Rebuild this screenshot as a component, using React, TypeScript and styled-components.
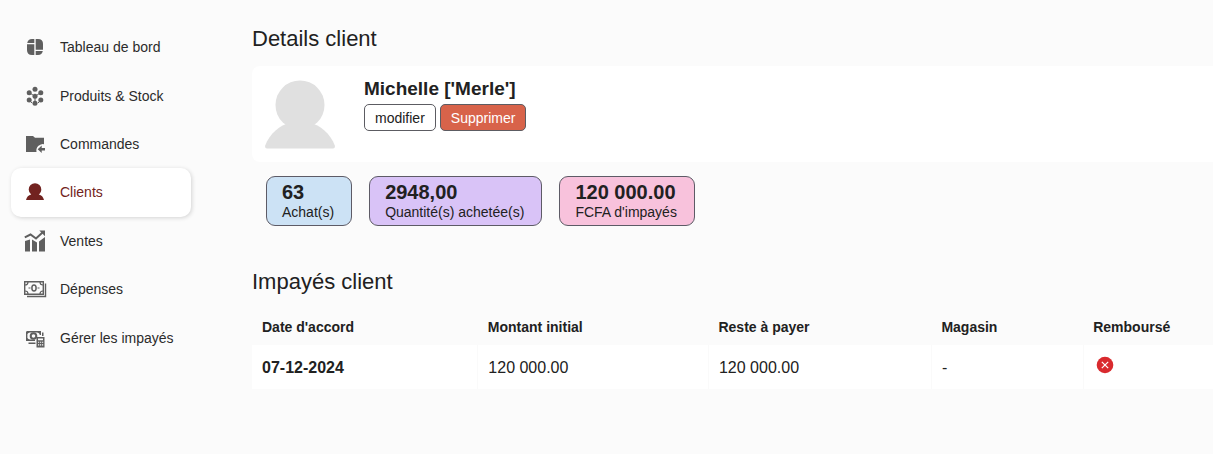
import React from "react";
import styled, { createGlobalStyle } from "styled-components";

const GlobalStyle = createGlobalStyle`
  * { box-sizing: border-box; }
  body {
    margin: 0;
    background: #fbfbfb;
    color: #212121;
    font-family: "Liberation Sans", Arial, sans-serif;
    font-size: 14px;
    overflow-x: hidden;
  }
`;

const Page = styled.div`
  display: flex;
  align-items: flex-start;
  min-height: 100vh;
`;

const Nav = styled.nav`
  flex: 0 0 180px;
  height: 339px;
  margin: 23px 61px 0 11px;
  display: grid;
  grid-auto-rows: 1fr;
`;

const NavLink = styled.a<{ $active?: boolean }>`
  display: flex;
  align-items: center;
  gap: 13px;
  padding-left: 12px;
  border-radius: 10px;
  text-decoration: none;
  white-space: nowrap;
  color: ${(p) => (p.$active ? "#722320" : "#2b2b2b")};
  background: ${(p) => (p.$active ? "#fff" : "transparent")};
  box-shadow: ${(p) => (p.$active ? "1px 1px 4px rgba(0, 0, 0, 0.16)" : "none")};
`;

const Icon = styled.svg<{ $active?: boolean }>`
  width: 24px;
  height: 24px;
  flex: none;
  color: ${(p) => (p.$active ? "#722320" : "#5f5f5f")};
`;

const Main = styled.main`
  flex: 1;
  min-width: 0;
  padding-top: 26px;
`;

const Title = styled.h2`
  margin: 0;
  font-size: 22px;
  line-height: 26px;
  font-weight: 400;
`;

const ClientCard = styled.section`
  display: flex;
  gap: 28px;
  margin-top: 14px;
  padding: 12px;
  min-height: 96px;
  background: #fff;
  border-radius: 8px 0 0 8px;
`;

const Avatar = styled.svg`
  width: 72px;
  height: 72px;
  flex: none;
`;

const ClientName = styled.h3`
  margin: 0 0 5px;
  font-size: 19px;
  line-height: 21px;
  font-weight: 700;
`;

const Actions = styled.div`
  display: flex;
  gap: 4px;
`;

const Button = styled.button<{ $danger?: boolean }>`
  height: 27px;
  padding: 0 10px;
  border: 1px solid #5c5c62;
  border-radius: 5px;
  font: inherit;
  color: ${(p) => (p.$danger ? "#fff" : "#212121")};
  background: ${(p) => (p.$danger ? "#d8634a" : "#fff")};
`;

const Stats = styled.div`
  display: flex;
  gap: 17px;
  margin: 14px 14px 0;
`;

const Stat = styled.div<{ $tint: string }>`
  padding: 4px 17px 4px 15px;
  border: 1px solid #5d5b66;
  border-radius: 9px;
  background: ${(p) => p.$tint};
  line-height: 18px;
`;

const StatValue = styled.strong`
  display: block;
  font-size: 20px;
  line-height: 22px;
`;

const Debts = styled.section`
  margin-top: 43px;
`;

const Table = styled.table`
  width: 100%;
  margin-top: 13px;
  table-layout: fixed;
  border-collapse: collapse;
  text-align: left;
  white-space: nowrap;
`;

const Col = styled.col<{ $share: number }>`
  width: ${(p) => p.$share}%;
`;

const HeadCell = styled.th`
  height: 37px;
  padding: 1px 10px 0;
`;

const Cell = styled.td`
  height: 44px;
  padding: 2px 10px 0;
  background: #fff;
  font-size: 16px;

  & + & {
    border-left: 1px solid #fafafa;
  }
`;

const Status = styled.svg`
  display: block;
  width: 18px;
  height: 18px;
  margin: 0 0 6px 2px;
`;

const icons = {
  board: (
    <g fill="currentColor">
      <path d="M11.3 4v4H4.200Q5 4 9 4z" />
      <path d="M4 9.300h7.300V20H9q-5 0-5-5z" />
      <path d="M12.700 4H15q5 0 5 5v5.700h-7.300z" />
      <path d="M12.700 16h7.100q-.8 4-4.800 4h-2.300z" />
    </g>
  ),
  molecule: (
    <g fill="currentColor">
      <path d="M12 12.500v6M12 12.500L7 9M12 12.500L17 9M6 16l3 3M18 16l-3 3" stroke="currentColor" strokeWidth="1" />
      <circle cx="12" cy="5.300" r="2.500" />
      <circle cx="6.200" cy="8.700" r="2.500" />
      <circle cx="17.800" cy="8.700" r="2.500" />
      <circle cx="12" cy="12.300" r="2.500" />
      <circle cx="6.200" cy="16" r="2.500" />
      <circle cx="17.800" cy="16" r="2.500" />
      <circle cx="12" cy="19.300" r="2.500" />
    </g>
  ),
  folder: (
    <g fill="currentColor">
      <path d="M3 4h7l2 1.800h9v6.400a6.500 6.500 0 0 0-7.500 7.800H3z" />
      <path d="M14.700 17.300l4-3.800v2.600H22v2.400h-3.300v2.600z" />
    </g>
  ),
  person: (
    <path
      fill="currentColor"
      d="M12 3.200a6.300 6.300 0 0 1 6.300 6.300c0 2.100-1 3.900-2.500 5 2.700.6 4.500 2.500 5.200 5.500H3c.7-3 2.500-4.900 5.200-5.500a6.300 6.300 0 0 1-2.500-5A6.300 6.300 0 0 1 12 3.200z"
    />
  ),
  chart: (
    <g fill="currentColor">
      <path d="M2 12l5-1.500V22.500H2zM9 10.500l5 3v9H9zM16 12.500l6-4.500v14.500h-6z" />
      <path d="M1.800 8.300L7.500 5.500l5.500 4L19.500 3.500" fill="none" stroke="currentColor" strokeWidth="2" />
      <path d="M16.300 1.500H22v5.700z" />
    </g>
  ),
  cash: (
    <g fill="none" stroke="currentColor">
      <path d="M1.700 4.700h18.600v12.600H1.700z" strokeWidth="1.400" />
      <path d="M22.500 6.500v13H4" strokeWidth="1.400" />
      <ellipse cx="11" cy="11" rx="2.100" ry="3" strokeWidth="1.500" />
      <path d="M2 8q3 0 3-3M17 5q0 3 3 3M2 14q3 0 3 3M17 17q0-3 3-3M5.500 11h2M14.500 11h2" strokeWidth="1.200" />
    </g>
  ),
  cashCalc: (
    <g fill="currentColor">
      <path d="M3.700 5.700h13.600v3.300M3.700 5.700v8.600h8.300" fill="none" stroke="currentColor" strokeWidth="1.400" />
      <path d="M3.500 5.500h4l-4 3zM17.500 5.500h-4l4 3zM3.500 14.500h4l-4-3z" />
      <circle cx="10.500" cy="10" r="2.800" fill="none" stroke="currentColor" strokeWidth="2" />
      <path d="M19 6.500h1.500V10H19zM5.500 16.500h7V18h-7z" />
      <path
        fillRule="evenodd"
        d="M13.500 11h8v10.500h-8zM15 12.500v1.800h5v-1.800zM15 15.700v1h1.200v-1zM17 15.700v1h1.200v-1zM19 15.700v1h1.200v-1zM15 18.300v1.200h1.200v-1.200zM17 18.300v1.200h1.200v-1.200zM19 18.300v1.200h1.200v-1.200z"
      />
    </g>
  ),
};

const links: { label: string; icon: keyof typeof icons; active?: boolean }[] = [
  { label: "Tableau de bord", icon: "board" },
  { label: "Produits & Stock", icon: "molecule" },
  { label: "Commandes", icon: "folder" },
  { label: "Clients", icon: "person", active: true },
  { label: "Ventes", icon: "chart" },
  { label: "Dépenses", icon: "cash" },
  { label: "Gérer les impayés", icon: "cashCalc" },
];

const stats = [
  { value: "63", label: "Achat(s)", tint: "#cce2f5" },
  { value: "2948,00", label: "Quantité(s) achetée(s)", tint: "#d9c3f7" },
  { value: "120 000.00", label: "FCFA d'impayés", tint: "#f8c2dc" },
];

const columns = [
  { label: "Date d'accord", share: 23.5 },
  { label: "Montant initial", share: 24 },
  { label: "Reste à payer", share: 23.2 },
  { label: "Magasin", share: 15.8 },
  { label: "Remboursé", share: 13.5 },
];

export default function App() {
  return (
    <>
      <GlobalStyle />
      <Page>
        <Nav>
          {links.map((l) => (
            <NavLink key={l.label} href="#" $active={l.active} aria-current={l.active ? "page" : undefined}>
              <Icon viewBox="0 0 24 24" $active={l.active} aria-hidden="true">
                {icons[l.icon]}
              </Icon>
              {l.label}
            </NavLink>
          ))}
        </Nav>
        <Main>
          <Title>Details client</Title>
          <ClientCard>
            <Avatar viewBox="0 0 72 72" aria-hidden="true">
              <g fill="#e0e0e0">
                <circle cx="36" cy="27" r="24.500" />
                <path d="M1 68C6 55 16 47 26 45h20c10 2 20 10 25 23q0 2.500-2 2.500H3q-2 0-2-2.500z" />
              </g>
            </Avatar>
            <div>
              <ClientName>Michelle ['Merle']</ClientName>
              <Actions>
                <Button type="button">modifier</Button>
                <Button type="button" $danger>
                  Supprimer
                </Button>
              </Actions>
            </div>
          </ClientCard>
          <Stats>
            {stats.map((s) => (
              <Stat key={s.label} $tint={s.tint}>
                <StatValue>{s.value}</StatValue>
                {s.label}
              </Stat>
            ))}
          </Stats>
          <Debts>
            <Title>Impayés client</Title>
            <Table>
              <colgroup>
                {columns.map((c) => (
                  <Col key={c.label} $share={c.share} />
                ))}
              </colgroup>
              <thead>
                <tr>
                  {columns.map((c) => (
                    <HeadCell key={c.label} scope="col">
                      {c.label}
                    </HeadCell>
                  ))}
                </tr>
              </thead>
              <tbody>
                <tr>
                  <Cell>
                    <strong>07-12-2024</strong>
                  </Cell>
                  <Cell>120 000.00</Cell>
                  <Cell>120 000.00</Cell>
                  <Cell>-</Cell>
                  <Cell>
                    <Status viewBox="0 0 18 18" role="img" aria-label="Non">
                      <circle cx="9" cy="9" r="8.300" fill="#d92a2e" />
                      <path d="M5.800 5.800l6.400 6.400M12.200 5.800l-6.400 6.400" stroke="#fff" strokeWidth="1.200" />
                    </Status>
                  </Cell>
                </tr>
              </tbody>
            </Table>
          </Debts>
        </Main>
      </Page>
    </>
  );
}
